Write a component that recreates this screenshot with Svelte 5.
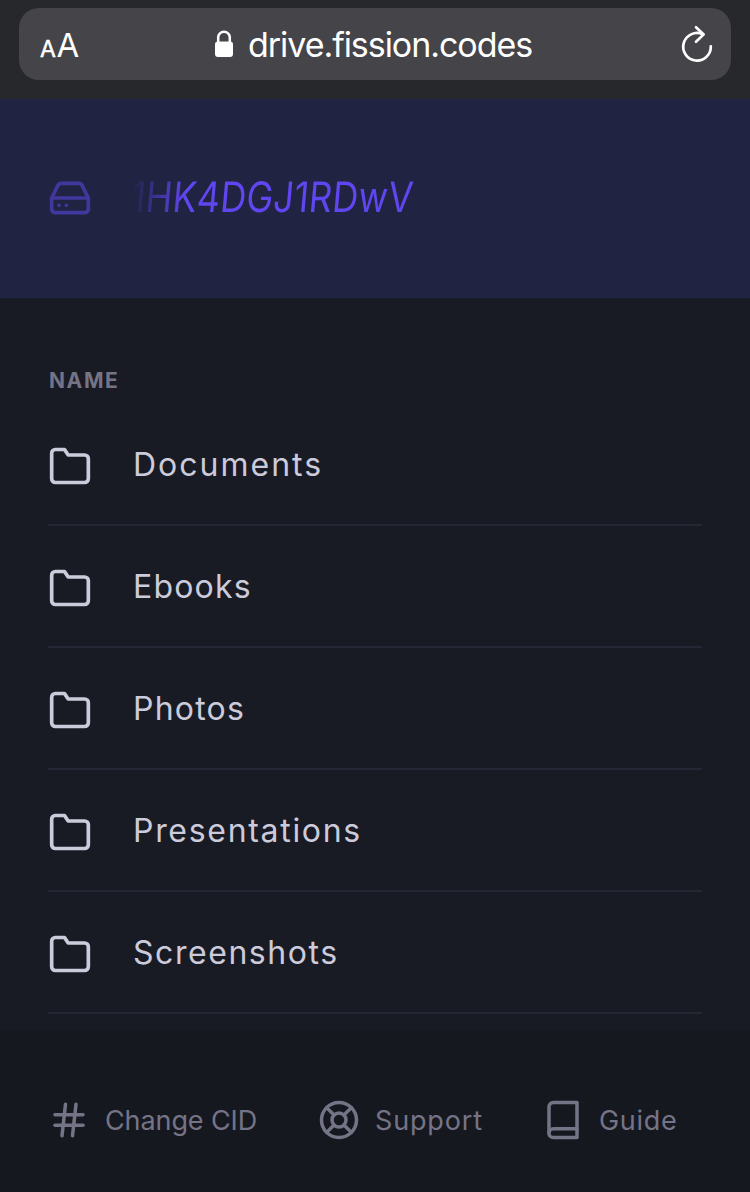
<script>
  const folders = [
    { name: 'Documents', spacing: 2 },
    { name: 'Ebooks', spacing: 1.2 },
    { name: 'Photos', spacing: 1.2 },
    { name: 'Presentations', spacing: 1.7 },
    { name: 'Screenshots', spacing: 1.55 }
  ];
</script>

<div class="screen">
  <div class="browser">
    <div class="address">
      <span class="size"><span class="small-a">A</span><span class="big-a">A</span></span>
      <span class="site">
        <svg class="lock" width="20" height="28" viewBox="0 0 20 28">
          <rect x="1" y="11.5" width="18" height="15.5" rx="3" fill="#fff" />
          <path d="M4.2 13V7.5a5.8 5.8 0 0 1 11.6 0V13" fill="none" stroke="#fff" stroke-width="2.5" />
        </svg>
        <span class="url">drive.fission.codes</span>
      </span>
      <svg class="reload" width="34" height="40" viewBox="0 0 34 40" fill="none" stroke="#fff" stroke-width="2.7" stroke-linecap="round" stroke-linejoin="round">
        <path d="M22.6 10.2 A13.8 13.8 0 1 0 30.8 22.4" />
        <path d="M16 3.2l7.7 7.2-7.7 7.4" />
      </svg>
    </div>
  </div>

  <header>
    <svg class="feather" width="44" height="44" viewBox="0 0 24 24">
      <line x1="22" y1="12" x2="2" y2="12" />
      <path d="M5.45 5.11L2 12v6a2 2 0 0 0 2 2h16a2 2 0 0 0 2-2v-6l-3.45-6.89A2 2 0 0 0 16.76 4H7.24a2 2 0 0 0-1.79 1.11z" />
      <line x1="6" y1="16" x2="6.01" y2="16" />
      <line x1="10" y1="16" x2="10.01" y2="16" />
    </svg>
    <h1>1HK4DGJ1RDwV</h1>
  </header>

  <main>
    <h2>NAME</h2>
    <ul>
      {#each folders as folder}
        <li>
          <svg class="feather" width="44" height="44" viewBox="0 0 24 24">
            <path d="M22 19a2 2 0 0 1-2 2H4a2 2 0 0 1-2-2V5a2 2 0 0 1 2-2h5l2 3h9a2 2 0 0 1 2 2z" />
          </svg>
          <span style="letter-spacing: {folder.spacing}px">{folder.name}</span>
        </li>
      {/each}
    </ul>
  </main>

  <footer>
    <a class="cid">
      <svg class="feather" width="42" height="42" viewBox="0 0 24 24">
        <line x1="4" y1="9" x2="20" y2="9" />
        <line x1="4" y1="15" x2="20" y2="15" />
        <line x1="10" y1="3" x2="8" y2="21" />
        <line x1="16" y1="3" x2="14" y2="21" />
      </svg>
      <span>Change CID</span>
    </a>
    <a class="support">
      <svg class="feather" width="42" height="42" viewBox="0 0 24 24">
        <circle cx="12" cy="12" r="10" />
        <circle cx="12" cy="12" r="4" />
        <line x1="4.93" y1="4.93" x2="9.17" y2="9.17" />
        <line x1="14.83" y1="14.83" x2="19.07" y2="19.07" />
        <line x1="14.83" y1="9.17" x2="19.07" y2="4.93" />
        <line x1="4.93" y1="19.07" x2="9.17" y2="14.83" />
      </svg>
      <span>Support</span>
    </a>
    <a class="guide">
      <svg class="feather" width="42" height="42" viewBox="0 0 24 24">
        <path d="M4 19.5A2.5 2.5 0 0 1 6.5 17H20" />
        <path d="M6.5 2H20v20H6.5A2.5 2.5 0 0 1 4 19.5v-15A2.5 2.5 0 0 1 6.5 2z" />
      </svg>
      <span>Guide</span>
    </a>
  </footer>
</div>

<style>
  :global(body) {
    margin: 0;
    background: #191b24;
  }
  .screen {
    width: 750px;
    height: 1192px;
    display: flex;
    flex-direction: column;
    overflow: hidden;
    background: #191b24;
    font-family: Inter, 'Liberation Sans', sans-serif;
  }
  .browser {
    height: 99px;
    box-sizing: border-box;
    padding: 8px 19px 19px;
    background: #27282c;
  }
  .address {
    height: 72px;
    box-sizing: border-box;
    padding: 0 17px 0 21px;
    border-radius: 20px;
    background: #444449;
    color: #fff;
    display: grid;
    grid-template-columns: 174px 1fr 34px;
    align-items: center;
  }
  .size {
    display: flex;
    align-items: baseline;
    line-height: 40px;
    padding-top: 5px;
  }
  .small-a {
    font-size: 23px;
    width: 16.5px;
    -webkit-text-stroke: 0.5px #fff;
  }
  .big-a {
    font-size: 33px;
  }
  .site {
    display: flex;
    align-items: center;
  }
  .url {
    margin-left: 14px;
    padding-top: 1px;
    font-size: 34px;
    line-height: 40px;
    white-space: nowrap;
    letter-spacing: -1.05px;
  }
  .feather {
    flex: none;
    fill: none;
    stroke: currentColor;
    stroke-width: 2;
    stroke-linecap: round;
    stroke-linejoin: round;
  }
  header {
    height: 199px;
    box-sizing: border-box;
    padding: 0 0 1px 48px;
    display: flex;
    align-items: center;
    background: #202342;
    color: #41379d;
  }
  h1 {
    margin: 0 0 2px 39px;
    font-size: 42px;
    font-weight: 400;
    line-height: 60px;
    transform-origin: left center;
    transform: skewX(-5deg) scaleX(0.855);
    letter-spacing: 0.25px;
    color: transparent;
    background: linear-gradient(90deg, rgba(96, 70, 240, 0) 0, #6046f0 64px);
    background-clip: text;
    -webkit-background-clip: text;
  }
  main {
    height: 732px;
    box-sizing: border-box;
    padding: 68px 48px 0;
  }
  h2 {
    margin: 0 0 0 1px;
    font-size: 21px;
    line-height: 30px;
    font-weight: 700;
    letter-spacing: 1.6px;
    color: #757487;
  }
  ul {
    margin: 8px 0 0;
    padding: 0;
    list-style: none;
  }
  li {
    height: 122px;
    box-sizing: border-box;
    padding-top: 4px;
    border-bottom: 2px solid #252735;
    display: flex;
    align-items: center;
    color: #cbcbdb;
    width: 654px;
  }
  li span {
    margin: 0 0 2px 41px;
    font-size: 32px;
    font-weight: 400;
    line-height: 44px;
  }
  footer {
    flex: 1;
    box-sizing: border-box;
    padding: 69px 0 0 48px;
    background: #161820;
    color: #757487;
    display: flex;
    align-items: flex-start;
  }
  a {
    display: flex;
    align-items: center;
    height: 42px;
    font-size: 27px;
    font-weight: 400;
    white-space: nowrap;
  }
  a span {
    margin-left: 15px;
  }
  .cid { width: 270px; letter-spacing: -0.1px; }
  .support { width: 224px; letter-spacing: 0.85px; }
  .guide { letter-spacing: 0.7px; }
</style>
